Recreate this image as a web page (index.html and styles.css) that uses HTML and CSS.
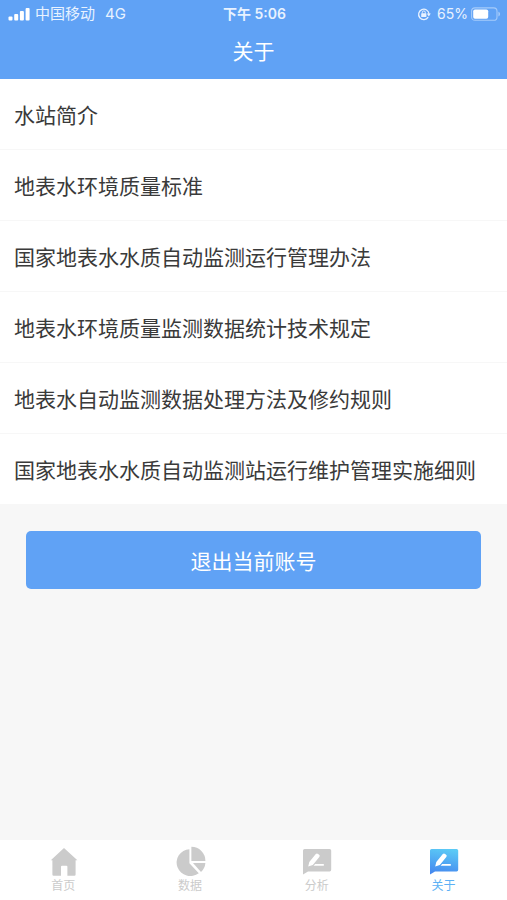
FILE: index.html
```html
<!DOCTYPE html>
<html lang="zh-CN">
<head>
<meta charset="utf-8">
<meta name="viewport" content="width=device-width, initial-scale=1">
<title>关于</title>
<link rel="stylesheet" href="styles.css">
</head>
<body>
<header class="header">
  <div class="status">
    <div class="status-left">
      <svg class="signal" viewBox="0 0 22 14" aria-hidden="true"><rect x="0.5" y="9.5" width="4" height="4" rx="1"/><rect x="6.2" y="7" width="4" height="6.5" rx="1"/><rect x="11.9" y="4" width="4" height="9.5" rx="1"/><rect x="17.6" y="1" width="4" height="12.5" rx="1"/></svg>
      <span class="carrier">中国移动</span>
      <span>4G</span>
    </div>
    <div class="clock">下午 5:06</div>
    <div class="status-right">
      <svg class="lock" viewBox="0 0 14 14" aria-hidden="true"><path d="M11.2 10.2A5.2 5.2 0 1 1 12 7" fill="none" stroke="currentColor" stroke-width="1.3"/><path d="M9.8 6.4h4L11.8 9.4z"/><rect x="4.2" y="6.2" width="5.2" height="3.8" rx=".6"/><path d="M5.3 6.5V5.4a1.5 1.5 0 0 1 3 0v1.1" fill="none" stroke="currentColor"/></svg>
      <span>65%</span>
      <svg class="battery" viewBox="0 0 30 14" aria-hidden="true"><rect x=".6" y=".9" width="25.4" height="12.4" rx="3.4" fill="none" stroke="#a5cbfa" stroke-width="1.1"/><rect x="2.2" y="2.5" width="15" height="9.2" rx="1.8" fill="#fff"/><path d="M27.4 4.8c2.2.7 2.2 3.9 0 4.6z" fill="#a5cbfa"/></svg>
    </div>
  </div>
  <h1 class="title">关于</h1>
</header>
<main class="content">
  <ul class="list">
    <li><a href="#">水站简介</a></li>
    <li><a href="#">地表水环境质量标准</a></li>
    <li><a href="#">国家地表水水质自动监测运行管理办法</a></li>
    <li><a href="#">地表水环境质量监测数据统计技术规定</a></li>
    <li><a href="#">地表水自动监测数据处理方法及修约规则</a></li>
    <li><a href="#">国家地表水水质自动监测站运行维护管理实施细则</a></li>
  </ul>
  <div class="actions"><button class="logout" type="button">退出当前账号</button></div>
</main>
<nav class="tabs">
  <a class="tab" href="#"><svg viewBox="0 0 32 32" aria-hidden="true"><path d="M17 2 30.4 14.2H28.6V28.6a1.2 1.2 0 0 1-1.2 1.2H20.4V20.8a1 1 0 0 0-1-1H15a1 1 0 0 0-1 1V29.8H6.6A1.2 1.2 0 0 1 5.4 28.6V14.2H3.8z"/></svg><span>首页</span></a>
  <a class="tab" href="#"><svg viewBox="0 0 32 32" aria-hidden="true"><path d="M15.4 3.2V17.2L24.8 27.2A13.8 13.4 0 1 1 15.4 3.2z"/><path d="M17.4 .8A14 14 0 0 1 31.4 15H17.4z"/><path d="M19 17H31.4A14 14 0 0 1 27 26z"/></svg><span>数据</span></a>
  <a class="tab" href="#"><svg viewBox="0 0 32 32" aria-hidden="true"><path d="M3.6 3H28.6A1.6 1.6 0 0 1 30.2 4.6V23.8A1.6 1.6 0 0 1 28.6 25.4H7L2 28.6V4.6A1.6 1.6 0 0 1 3.6 3z"/><path class="pen" d="M7.2 20.4 8.3 16 14.8 8.1a1.6 1.6 0 0 1 2.3-.2l1 .8a1.6 1.6 0 0 1 .2 2.3L11.8 18.9z"/><path class="pen" d="M14.2 18H22.8V19.8H12.6z"/></svg><span>分析</span></a>
  <a class="tab active" href="#" aria-current="page"><svg viewBox="0 0 32 32" aria-hidden="true"><defs><linearGradient id="bubble" x1=".6" y1="0" x2=".4" y2="1"><stop stop-color="#5bcaf6"/><stop offset="1" stop-color="#4588ef"/></linearGradient></defs><path fill="url(#bubble)" d="M3.6 3H28.6A1.6 1.6 0 0 1 30.2 4.6V23.8A1.6 1.6 0 0 1 28.6 25.4H7L2 28.6V4.6A1.6 1.6 0 0 1 3.6 3z"/><path class="pen" d="M7.2 20.4 8.3 16 14.8 8.1a1.6 1.6 0 0 1 2.3-.2l1 .8a1.6 1.6 0 0 1 .2 2.3L11.8 18.9z"/><path class="pen" d="M14.2 18H22.8V19.8H12.6z"/></svg><span>关于</span></a>
</nav>
</body>
</html>
```
FILE: styles.css
```css
* {
  box-sizing: border-box;
}

body {
  display: flex;
  flex-direction: column;
  min-height: 100vh;
  margin: 0;
  background: #f7f7f7;
  color: #3a3a3a;
  font-family: Inter, "Noto Sans CJK SC", sans-serif;
}

a {
  color: inherit;
  text-decoration: none;
}

svg {
  flex: none;
  fill: currentColor;
}

.header {
  background: #60a2f5;
  color: #fff;
}

.status {
  display: grid;
  grid-template-columns: 1fr auto 1fr;
  align-items: center;
  height: 28px;
  padding: 0 6px 0 8px;
  font-size: 14px;
  line-height: 20px;
  color: #e8f2ff;
}

.status-left,
.status-right {
  display: flex;
  align-items: center;
}

.status-left {
  font-size: 15px;
}

.status-right {
  justify-content: flex-end;
}

.signal {
  width: 22px;
  height: 14px;
  margin-right: 5px;
  color: #fff;
}

.carrier {
  margin-right: 10px;
}

.clock {
  font-weight: 600;
}

.lock {
  width: 14px;
  height: 14px;
  margin-right: 6px;
}

.battery {
  width: 30px;
  height: 14px;
  margin-left: 3px;
}

.title {
  margin: 0;
  padding-bottom: 3px;
  font-size: 21px;
  font-weight: 400;
  line-height: 48px;
  text-align: center;
}

.content {
  flex: 1;
}

.list {
  margin: 0;
  padding: 0;
  list-style: none;
  background: #fff;
}

.list li + li {
  border-top: 1px solid #f7f7f7;
}

.list a {
  display: block;
  padding: 22px 14px 18px;
  font-size: 21px;
  line-height: 30px;
}

.actions {
  padding: 27px 26px;
}

.logout {
  width: 100%;
  height: 58px;
  padding: 0;
  border: 0;
  border-radius: 5px;
  background: #60a2f5;
  color: #fff;
  font: inherit;
  font-size: 21px;
}

.tabs {
  display: flex;
  background: #fff;
}

.tab {
  display: flex;
  flex: 1;
  flex-direction: column;
  align-items: center;
  padding: 6px 0;
  color: #cbcbcb;
  font-size: 12px;
  line-height: 16px;
}

.tab svg {
  width: 32px;
  height: 32px;
}

.tab .pen {
  fill: #fff;
}

.active {
  color: #5db1f5;
}
```
